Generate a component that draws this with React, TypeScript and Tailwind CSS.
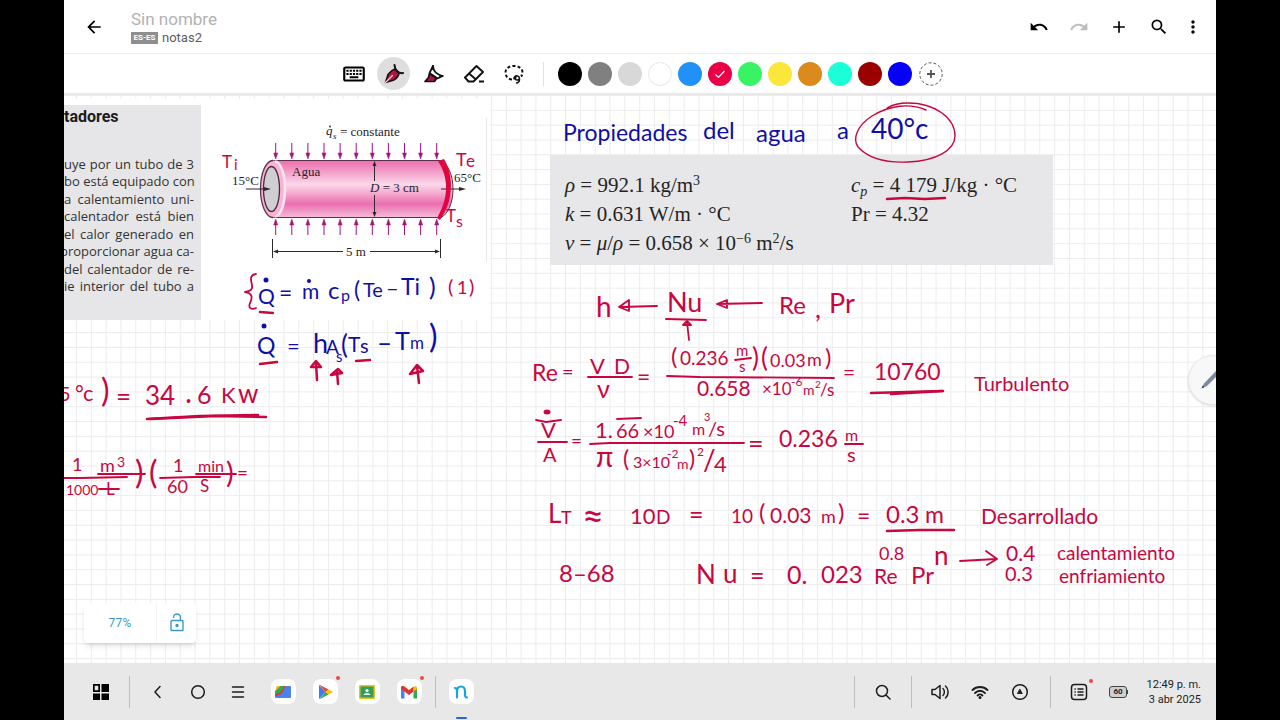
import type { ReactNode } from "react";
import {
  MdAdd,
  MdArrowBack,
  MdMoreVert,
  MdOutlineKeyboard,
  MdRedo,
  MdSearch,
  MdUndo,
} from "react-icons/md";

const RED = "#c9063f";
const BLUE = "#100ea6";

const swatches = [
  { name: "Negro", className: "bg-black" },
  { name: "Gris", className: "bg-[#808080]" },
  { name: "Gris claro", className: "bg-[#d8d8d8]" },
  { name: "Blanco", className: "bg-white border border-gray-200" },
  { name: "Azul", className: "bg-[#2190f8]" },
  { name: "Rojo", className: "bg-[#ea0046]", selected: true },
  { name: "Verde", className: "bg-[#38f364]" },
  { name: "Amarillo", className: "bg-[#fbe63c]" },
  { name: "Naranja", className: "bg-[#dc8a1c]" },
  { name: "Turquesa", className: "bg-[#1affd8]" },
  { name: "Vino", className: "bg-[#9b0000]" },
  { name: "Azul oscuro", className: "bg-[#0600f6]" },
];

// [text, x, baseline, size]
type Word = [string, number, number, number];

const blueWords: Word[] = [
  ["Propiedades", 563, 141, 23],
  ["del", 703, 139, 24],
  ["agua", 756, 142, 24],
  ["a", 837, 139, 24],
  ["40°c", 871, 139, 28],
  ["Q", 258, 304, 21],
  ["=", 279, 301, 23],
  ["m", 302, 299, 21],
  ["c", 328, 299, 24],
  ["p", 341, 301, 16],
  ["(", 354, 298, 23],
  ["Te", 363, 297, 20],
  ["–", 386, 296, 22],
  ["Ti", 401, 295, 23],
  [")", 429, 296, 25],
  ["Q", 257, 354, 23],
  ["=", 287, 354, 22],
  ["h", 313, 353, 27],
  ["A", 326, 354, 19],
  ["s", 336, 362, 15],
  ["(", 341, 354, 26],
  ["T", 348, 352, 21],
  ["s", 360, 353, 20],
  ["–", 377, 352, 26],
  ["T", 395, 350, 25],
  ["m", 410, 349, 17],
  [")", 429, 348, 32],
];

const redWords: Word[] = [
  ["(", 448, 294, 20],
  ["1", 457, 294, 18],
  [")", 469, 294, 20],
  ["T", 222, 168, 17],
  ["i", 234, 170, 15],
  ["T", 456, 166, 18],
  ["e", 466, 167, 17],
  ["T", 446, 222, 17],
  ["s", 456, 227, 16],
  // left column
  ["5", 59, 401, 20],
  ["°", 75, 401, 21],
  ["c", 83, 401, 22],
  [")", 101, 402, 32],
  ["=", 116, 406, 26],
  ["34", 145, 405, 26],
  [".", 185, 403, 30],
  ["6", 197, 404, 25],
  ["K", 221, 403, 22],
  ["w", 238, 403, 26],
  ["1", 72, 471, 18],
  ["m", 100, 472, 18],
  ["3", 117, 467, 14],
  ["1000", 66, 495, 14],
  ["L", 106, 495, 17],
  [")", 135, 484, 32],
  ["(", 149, 484, 32],
  ["1", 173, 472, 18],
  ["min", 198, 472, 16],
  ["60", 167, 493, 18],
  ["S", 200, 492, 17],
  [")", 226, 483, 29],
  ["=", 237, 480, 19],
  // h <- Nu <- Re, Pr
  ["h", 596, 317, 28],
  ["Nu", 667, 312, 27],
  ["Re", 779, 314, 24],
  [",", 815, 318, 26],
  ["Pr", 829, 313, 27],
  // Reynolds
  ["Re", 532, 381, 23],
  ["=", 562, 379, 20],
  ["V", 590, 374, 22],
  ["D", 614, 374, 21],
  ["ν", 597, 398, 25],
  ["=", 637, 385, 23],
  ["(", 671, 365, 24],
  ["0.236", 680, 365, 19],
  ["m", 736, 356, 15],
  ["s", 739, 372, 15],
  [")", 752, 367, 26],
  ["(", 761, 367, 26],
  ["0.03", 770, 367, 18],
  ["m", 807, 366, 18],
  [")", 825, 366, 24],
  ["0.658", 697, 396, 21],
  ["×10", 762, 395, 17],
  ["-6", 791, 386, 12],
  ["m", 803, 395, 14],
  ["2", 815, 388, 10],
  ["/s", 820, 396, 17],
  ["=", 843, 380, 21],
  ["10760", 874, 380, 23],
  ["Turbulento", 974, 391, 20],
  // Velocity
  ["V", 541, 438, 22],
  ["A", 543, 462, 20],
  ["=", 571, 448, 19],
  ["1.", 595, 438, 22],
  ["66", 616, 438, 20],
  ["×10", 643, 438, 18],
  ["-4", 673, 426, 15],
  ["m", 692, 435, 16],
  ["3", 704, 421, 11],
  ["/s", 708, 436, 20],
  ["π", 596, 467, 28],
  ["(", 623, 467, 23],
  ["3×10", 633, 468, 16],
  ["-2", 667, 458, 12],
  ["m", 677, 469, 14],
  [")", 689, 467, 23],
  ["2", 697, 456, 12],
  ["/", 703, 470, 28],
  ["4", 714, 472, 22],
  ["=", 748, 453, 27],
  ["0.236", 779, 447, 23],
  ["m", 845, 441, 16],
  ["s", 847, 462, 20],
  // Entry length
  ["L", 548, 523, 26],
  ["T", 561, 524, 18],
  ["≈", 582, 529, 38],
  ["10", 630, 524, 22],
  ["D", 656, 524, 19],
  ["=", 689, 524, 25],
  ["10", 731, 523, 19],
  ["(", 759, 521, 24],
  ["0.03", 770, 523, 21],
  ["m", 821, 523, 18],
  [")", 838, 521, 24],
  ["=", 857, 524, 23],
  ["0.3", 886, 523, 24],
  ["m", 925, 523, 23],
  ["Desarrollado", 981, 524, 21],
  // Dittus-Boelter
  ["8–68", 559, 582, 24],
  ["N", 696, 584, 26],
  ["u", 723, 583, 26],
  ["=", 750, 585, 25],
  ["0.", 787, 584, 25],
  ["023", 821, 583, 24],
  ["Re", 874, 584, 21],
  ["0.8", 879, 560, 18],
  ["Pr", 911, 584, 24],
  ["n", 934, 565, 26],
  ["0.4", 1006, 561, 21],
  ["calentamiento", 1057, 560, 19],
  ["0.3", 1005, 581, 20],
  ["enfriamiento", 1059, 583, 19],
];

const inkLines = [
  // fraction bars, underlines
  "M64 478H80L127 477", "M98 474H145", "M160 478L195 477L220 477", "M196 474H236",
  "M99 489H119", "M666 319L706 320", "M588 377H632", "M667 376L700 377L834 378",
  "M735 360L751 358", "M538 442H567", "M590 444L610 443L744 443", "M617 419L641 418",
  "M845 444H863", "M536 420L546 422L561 420",
  // arrows
  "M657 306L620 307M629 300L619 307L629 311Z", "M762 303L717 304M727 300L717 304L727 308Z",
  "M689 340L687 322M683 325L687 321L691 325Z",
  "M960 561L996 559M986 551L997 559L987 565",
  // brace
  "M256 274C249 275 251 281 252 285C253 290 250 291 245 292C252 293 253 297 250 303C248 308 251 310 256 308",
];

const thickLines = [
  "M260 312L273 313", "M260 364L277 362", "M356 361L370 360",
  "M147 419L200 416L258 415", "M150 419L215 416L266 417",
  "M871 393L943 391", "M891 394L942 391", "M887 531L920 530L954 530",
  "M887 199L905 198L925 199L945 198",
  "M317 380L316 363M311 367L316 361L321 367Z", "M338 384L337 371M331 375L338 369L342 373Z",
  "M419 383L417 366M410 374L417 365L423 371Z",
];

const heatArrows = Array.from({ length: 11 }, (_, i) => 275.7 + i * 16.1);

function Ink({ words, color }: { words: Word[]; color: string }) {
  return (
    <g fill={color} className="font-['Lato','DejaVu_Sans',sans-serif]">
      {words.map(([text, x, y, size]) => (
        <text key={`${text}-${x}-${y}`} x={x} y={y} fontSize={size}>
          {text}
        </text>
      ))}
    </g>
  );
}

function PipeDiagram() {
  return (
    <g>
      <defs>
        <linearGradient id="pipe" x1="0" y1="0" x2="0" y2="1">
          <stop offset="0" stopColor="#ee6fb0" />
          <stop offset="0.14" stopColor="#f08fc0" />
          <stop offset="0.42" stopColor="#fbd8ea" />
          <stop offset="0.6" stopColor="#f4a2cb" />
          <stop offset="0.76" stopColor="#ea6fb0" />
          <stop offset="1" stopColor="#f7bbd9" />
        </linearGradient>
      </defs>
      <path d="M486.500 118V262" stroke="#e6e6e6" />
      <path
        d="M273 160.500H441C448 164 453 175 453 189S448 214 441 217.500H273Z"
        fill="url(#pipe)"
        stroke="#5c3048"
      />
      <ellipse cx="273" cy="189" rx="12" ry="28.500" fill="#f7b4d5" />
      <path d="M273 160.500A12.500 28.500 0 0 0 273 217.500" fill="none" stroke="#5c3048" strokeWidth="1.300" />
      <path d="M275 161.500A10 27.500 0 0 1 275 216.500" fill="none" stroke="#fde3ef" strokeWidth="2.500" />
      <ellipse cx="271.500" cy="189" rx="8" ry="22.500" fill="#cfcfd3" stroke="#4a2a3c" strokeWidth="1.300" />

      {heatArrows.map((x) => (
        <g key={x} stroke="#a8107c" fill="#a8107c">
          <path d={`M${x} 143V155`} />
          <path d={`M${x} 159l-2-6h4z`} strokeWidth="0.500" />
          <path d={`M${x} 235V224`} />
          <path d={`M${x} 219l-2 6h4z`} strokeWidth="0.500" />
        </g>
      ))}

      <g stroke="#2a2a2a" fill="none">
        <path d="M246 189H265M441 189H461M374.500 164V181M374.500 195V214" />
        <path d="M272.500 239V258M440.500 239V258M276 251.500H343M370 251.500H437" />
      </g>
      <g fill="#2a2a2a">
        <path d="M271 189l-7-2v4zM466 189l-7-2v4zM374.500 161l-2 5h4zM374.500 217l-2-5h4z" />
        <path d="M273 251.500l5-2v4zM440 251.500l-5-2v4z" />
      </g>

      <g fill="#26222a" fontSize="13" className="font-['Liberation_Serif',serif]">
        <text x="326" y="135" fontStyle="italic">q</text>
        <circle cx="330" cy="126.500" r="0.900" />
        <text x="333" y="139" fontSize="9" fontStyle="italic">s</text>
        <text x="340" y="136">= constante</text>
        <text x="292" y="176">Agua</text>
        <text x="232" y="185">15°C</text>
        <text x="454" y="182">65°C</text>
        <text x="370" y="192"><tspan fontStyle="italic">D</tspan> = 3 cm</text>
        <text x="346" y="256">5 m</text>
      </g>
    </g>
  );
}

function Property({ children }: { children: ReactNode }) {
  return <p className="h-[29px] leading-[29px] whitespace-nowrap">{children}</p>;
}

function Sup({ children }: { children: ReactNode }) {
  return <sup className="text-sm leading-none">{children}</sup>;
}

function Page() {
  return (
    <main className="relative min-h-0 flex-1 overflow-hidden bg-white">
      <svg aria-hidden="true" className="absolute inset-0 h-full w-full">
        <defs>
          <pattern id="grid" x="12" y="0" width="14.820" height="14.820" patternUnits="userSpaceOnUse">
            <path d="M0.500 0V14.820M0 0.500H14.820" stroke="#ececec" fill="none" />
          </pattern>
        </defs>
        <rect width="100%" height="100%" fill="url(#grid)" />
      </svg>

      {/* pasted textbook clippings */}
      <div className="absolute top-1 left-0 h-[221px] w-[426px] bg-white" />
      <section className="absolute top-[10px] left-0 h-[215px] w-[137px] overflow-hidden bg-[#e6e6e8] font-['Open_Sans',sans-serif] text-[#333]">
        <h2 className="flex h-6 items-center font-['Roboto',sans-serif] text-base font-bold text-[#1c1c1c]">
          tadores
        </h2>
        <div className="mt-[27px] mr-[7px] text-[13px] leading-[17px] whitespace-nowrap [text-align-last:justify]">
          <p>uye por un tubo de 3</p>
          <p className="pb-px">bo está equipado con</p>
          <p>a calentamiento uni-</p>
          <p className="pb-px">calentador está bien</p>
          <p>el calor generado en</p>
          <p className="-ml-1 pb-px">proporcionar agua ca-</p>
          <p>del calentador de re-</p>
          <p>ie interior del tubo a</p>
        </div>
      </section>
      <section className="absolute top-[60px] left-[486px] flex h-[110px] w-[503px] bg-[#e7e7e9] px-[15px] pt-4 font-['Liberation_Serif',serif] text-[21px] text-[#242424]">
        <div className="w-[286px]">
          <Property><i>ρ</i> = 992.1 kg/m<Sup>3</Sup></Property>
          <Property><i>k</i> = 0.631 W/m · °C</Property>
          <Property>
            <i>ν</i> = <i>μ</i>/<i>ρ</i> = 0.658 × 10<Sup>−6</Sup> m<Sup>2</Sup>/s
          </Property>
        </div>
        <div>
          <Property><i>c</i><sub className="text-sm leading-none italic">p</sub> = 4 179 J/kg · °C</Property>
          <Property>Pr = 4.32</Property>
        </div>
      </section>

      {/* drawing layer */}
      <svg
        viewBox="64 95 1152 568"
        className="pointer-events-none absolute top-0 left-0 h-[568px] w-[1152px]"
      >
        <PipeDiagram />
        <Ink words={blueWords} color={BLUE} />
        <Ink words={redWords} color={RED} />
        <g fill={BLUE}>
          <circle cx="266" cy="280" r="2.500" />
          <circle cx="309" cy="281" r="2" />
          <circle cx="264" cy="326" r="2.500" />
        </g>
        <ellipse cx="547" cy="412" rx="3.500" ry="2.500" fill={RED} />
        <g fill="none" stroke={RED} strokeLinecap="round" strokeLinejoin="round">
          <g strokeWidth="1.800">
            {inkLines.map((d) => <path key={d} d={d} />)}
          </g>
          <g strokeWidth="2.500">
            {thickLines.map((d) => <path key={d} d={d} />)}
          </g>
          <path
            d="M926 110C910 103 890 105 872 116C858 125 852 138 858 147C868 158 885 163 908 162C936 161 955 150 955 136C955 118 935 103 908 103C898 103 892 105 887 108"
            strokeWidth="1.400"
          />
        </g>
        <path d="M438 161L444 159C453 174 455 199 440 220L437 218C449 198 449 178 438 161Z" fill="#e0053f" />
      </svg>

      <div className="absolute bottom-5 left-5 flex h-10 items-center rounded-sm bg-white shadow-md">
        <button className="h-10 w-[73px] border-r border-gray-100 font-['Roboto',sans-serif] text-xs tracking-wide text-[#3b9acb]">
          77%
        </button>
        <button aria-label="Bloquear zoom" className="flex h-10 w-[39px] items-center justify-center">
          <svg viewBox="0 0 16 20" className="h-5 w-4" fill="none" stroke="#3b9acb" strokeWidth="1.400">
            <rect x="2" y="7.500" width="12" height="10" rx="0.800" />
            <path d="M4.500 5V4.500A3.500 3.500 0 0 1 11.500 4.500V7.500" />
            <circle cx="8" cy="12.500" r="1" fill="#3b9acb" />
          </svg>
        </button>
      </div>

      <button
        aria-label="Lápiz"
        className="absolute top-[260px] -right-[22px] flex h-[50px] w-[50px] items-center rounded-full border border-gray-200 bg-[#f8f8f8] pl-3 shadow-sm"
      >
        <svg viewBox="0 0 24 24" className="h-6 w-6" fill="#7e89a3">
          <path d="M0.500 20.500L3 15.500L17 1L20 4L6 18Z" />
          <path d="M0.500 20.500L1.700 17.500L3.500 19Z" fill="#3c4662" />
        </svg>
      </button>
    </main>
  );
}

function Tool({ label, active, children }: { label: string; active?: boolean; children: ReactNode }) {
  return (
    <button aria-label={label} className="flex w-10 items-center justify-center">
      <span
        className={
          active
            ? "flex h-[33px] w-[33px] items-center justify-center rounded-full bg-[#dedede]"
            : "flex items-center justify-center"
        }
      >
        {children}
      </span>
    </button>
  );
}

function Header() {
  return (
    <header className="flex h-[54px] shrink-0 items-center border-b border-[#ededed] pr-[10px] pl-5 font-['Roboto',sans-serif] text-black">
      <button aria-label="Atrás" className="flex w-5 justify-center">
        <MdArrowBack className="h-5 w-5" />
      </button>
      <div className="mt-[3px] ml-[27px] flex flex-col">
        <h1 className="text-[17px] leading-5 text-[#b2b2b2]">Sin nombre</h1>
        <div className="flex items-center gap-1 text-[13px] leading-[18px] text-[#5c5c5c]">
          <span className="flex h-3 w-[27px] items-center justify-center bg-[#8e8e8e] text-[8px] font-bold text-white">
            ES-ES
          </span>
          <span>notas2</span>
        </div>
      </div>
      <div className="ml-auto flex items-center">
        <button aria-label="Deshacer" className="flex w-10 justify-center"><MdUndo className="h-5 w-5" /></button>
        <button aria-label="Rehacer" className="flex w-10 justify-center text-[#bdbdbd]"><MdRedo className="h-5 w-5" /></button>
        <button aria-label="Añadir" className="flex w-10 justify-center"><MdAdd className="h-5 w-5" /></button>
        <button aria-label="Buscar" className="flex w-10 justify-center"><MdSearch className="h-5 w-5" /></button>
        <button aria-label="Más opciones" className="flex w-[27px] justify-center"><MdMoreVert className="h-5 w-5" /></button>
      </div>
    </header>
  );
}

function Toolbar() {
  return (
    <nav className="flex h-[41px] shrink-0 items-center justify-center border-b-2 border-[#e8e8e8]">
      <Tool label="Teclado"><MdOutlineKeyboard className="h-[26px] w-[26px] text-black" /></Tool>
      <Tool label="Pluma" active>
        <svg viewBox="0 0 20 20" className="h-5 w-5" stroke="#111" strokeWidth="1.500" strokeLinejoin="round" strokeLinecap="round">
          <path d="M1.500 18.500L4 10.500C6 7.500 8 6 11 5L15 9.500C14.500 12 13 14 10 16Z" fill="#b3123f" />
          <path d="M10.500 1C10.500 3.500 11 5 13 7C15 9 16.500 9.500 19 9" fill="none" strokeWidth="2" />
          <path d="M1.500 18.500L8.500 11.500" fill="none" stroke="#f4d3dc" strokeWidth="1.200" />
        </svg>
      </Tool>
      <Tool label="Rotulador">
        <svg viewBox="0 0 20 20" className="h-5 w-5" stroke="#111" strokeWidth="1.700" strokeLinejoin="round" strokeLinecap="round">
          <path d="M9 2C9 6 12 10 18.500 12L13.500 14.500L5.500 9Z" fill="#fff" />
          <path d="M5.500 9.500L12.500 14.500L10.500 17.500H1L4.500 13.500Z" fill="#b3123f" />
          <path d="M9 2V5M18.500 12H16" fill="none" strokeWidth="2.200" />
        </svg>
      </Tool>
      <Tool label="Borrador">
        <svg viewBox="0 0 20 20" className="h-5 w-5" fill="none" stroke="#111" strokeWidth="1.900" strokeLinejoin="round">
          <path d="M1 13.500L12.500 2L19 8L9.500 17.500H4.500Z" />
          <path d="M5 9.500L12 15.500M15 17.500H20" />
        </svg>
      </Tool>
      <Tool label="Lazo">
        <svg viewBox="0 0 20 20" className="h-5 w-5" fill="none" stroke="#111" strokeWidth="2">
          <path d="M8 15.500C4 15 1.500 12.500 1.500 8.500C1.500 4.500 5 2 10 2S18.500 4.500 18.500 8.500C18.500 10 18 11.500 17 12.500" strokeDasharray="3 2.200" />
          <path d="M10.500 15.500C9 14 11 11.500 13.500 12S16 16 13.500 16S10.500 14 12.500 13.500M15.500 15C15.500 17.500 14.500 19 12 19" strokeWidth="1.600" />
        </svg>
      </Tool>
      <span className="mr-[11px] ml-[9px] h-6 w-px bg-[#e0e0e0]" />
      {swatches.map((swatch) => (
        <button key={swatch.name} aria-label={swatch.name} className="flex w-[30px] justify-center">
          <span className={`flex h-6 w-6 items-center justify-center rounded-full ${swatch.className}`}>
            {swatch.selected && (
              <svg viewBox="0 0 12 12" className="h-3 w-3" fill="none" stroke="#fff" strokeWidth="1.200">
                <path d="M1.500 6.500L4.500 9.500L10.500 3" />
              </svg>
            )}
          </span>
        </button>
      ))}
      <button aria-label="Añadir color" className="flex w-8 justify-center">
        <svg viewBox="0 0 24 24" className="h-6 w-6" fill="none" stroke="#555">
          <circle cx="12" cy="12" r="11.200" strokeDasharray="3 2" />
          <path d="M12 8V16M8 12H16" strokeWidth="1.800" />
        </svg>
      </button>
    </nav>
  );
}

function AppIcon({ label, dot, children }: { label: string; dot?: boolean; children: ReactNode }) {
  return (
    <button aria-label={label} className="relative flex w-[42px] justify-center">
      <span className="flex h-[25px] w-[25px] items-center justify-center rounded-lg bg-white">
        <svg viewBox="0 0 18 18" className="h-[18px] w-[18px]">{children}</svg>
      </span>
      {dot && <span className="absolute -top-[3px] right-[6px] h-1 w-1 rounded-full bg-[#f04848]" />}
    </button>
  );
}

function SystemIcon({ label, children }: { label: string; children: ReactNode }) {
  return (
    <button aria-label={label} className="flex w-10 justify-center">
      <svg viewBox="0 0 20 20" className="h-5 w-5" fill="none" stroke="#1d1d1d" strokeWidth="1.500" strokeLinecap="round" strokeLinejoin="round">
        {children}
      </svg>
    </button>
  );
}

function Taskbar() {
  return (
    <footer className="flex h-[57px] shrink-0 items-center bg-[#e8e8e8] pr-[15px] pl-[17px] font-['Roboto',sans-serif] text-[#1d1d1d]">
      <SystemIcon label="Aplicaciones">
        <g fill="#000" stroke="none">
          <path d="M2 2H9V10H2ZM3.700 3.700V8.300H7.300V3.700Z" fillRule="evenodd" />
          <path d="M10.500 2H18V10H10.500ZM2 11.500H9V18H2ZM10.500 11.500H18V18H10.500Z" />
        </g>
      </SystemIcon>
      <span className="mr-2 ml-2 h-8 w-px bg-[#bdbdbd]" />
      <SystemIcon label="Volver"><path d="M12 4.500L7 10L12 15.500" /></SystemIcon>
      <SystemIcon label="Inicio"><circle cx="10" cy="10" r="6.300" /></SystemIcon>
      <SystemIcon label="Recientes"><path d="M4.500 5H15.500M4.500 10H15.500M4.500 15H15.500" /></SystemIcon>
      <span className="w-1" />
      <AppIcon label="Archivos">
        <path d="M4 3H16Q17 3 17 4V14Q17 15 16 15H2Q1 15 1 14V9Z" fill="#4a84e8" />
        <path d="M1 13V9L7 3H11C10.500 8 7 12.500 1 13Z" fill="#d93b30" />
        <path d="M1 11V8L6 3H9.500C9 7.500 6 10.500 1 11Z" fill="#36a852" />
        <path d="M2 7.500L6.500 3H4Q2 3 2 5Z" fill="#f6b91c" />
      </AppIcon>
      <AppIcon label="Play Store" dot>
        <path d="M3 2V16L9.500 9Z" fill="#3b7ded" />
        <path d="M3 1.500L12.500 6.500L9.500 9Z" fill="#ea4335" />
        <path d="M3 16.500L12.500 11.500L9.500 9Z" fill="#34a853" />
        <path d="M12.500 6.500L17 9L12.500 11.500L9.500 9Z" fill="#fbbc04" />
      </AppIcon>
      <AppIcon label="Classroom">
        <rect x="1" y="2" width="16" height="14" rx="1" fill="#f2bc1f" />
        <rect x="2.500" y="3.500" width="13" height="11" fill="#2da05a" />
        <circle cx="9" cy="7.500" r="1.600" fill="#fff" />
        <path d="M5.500 12C5.500 9.500 12.500 9.500 12.500 12Z" fill="#fff" />
      </AppIcon>
      <AppIcon label="Gmail" dot>
        <path d="M1 4V15.500H4.500V7Z" fill="#4285f4" />
        <path d="M17 4V15.500H13.500V7Z" fill="#34a853" />
        <path d="M13.500 8.500V4.500L15 3L17 4V6Z" fill="#fbbc04" />
        <path d="M1 4.500C1 3 3 2 4.500 3.500L9 7L13.500 3.500V8.500L9 12L1 6Z" fill="#e2382c" />
      </AppIcon>
      <span className="ml-[5px] h-8 w-px bg-[#bdbdbd]" />
      <button aria-label="Nebo" className="relative ml-1 flex h-[57px] w-[42px] items-center justify-center">
        <span className="flex h-[25px] w-[25px] items-center justify-center rounded-lg bg-white">
          <svg viewBox="0 0 18 18" className="h-[18px] w-[18px]" fill="none" stroke="#18a5dc" strokeWidth="2.200" strokeLinecap="round">
            <path d="M3 5C4.500 5 5 6 5 8V14.500M5 8.500C5 5 6.500 3.500 9 3.500S13 5 13 8.500V11.500C13 13.500 13.500 14.500 15 14.500" />
          </svg>
        </span>
        <span className="absolute bottom-px h-[2px] w-[11px] rounded-full bg-[#2f62d9]" />
      </button>

      <span className="mr-2 ml-auto h-8 w-px bg-[#bdbdbd]" />
      <SystemIcon label="Buscar"><circle cx="9" cy="9" r="5.500" /><path d="M13.200 13.200L17 17" /></SystemIcon>
      <span className="mr-2 ml-2 h-8 w-px bg-[#bdbdbd]" />
      <SystemIcon label="Volumen">
        <path d="M2 7.500V12.500H5L10 16.500V3.500L5 7.500ZM13 6.500C14.800 8 14.800 12 13 13.500M15.500 4C19 7 19 13 15.500 16" />
      </SystemIcon>
      <SystemIcon label="Wi-Fi">
        <path d="M2.500 8C6.500 4 13.500 4 17.500 8M5 11C8 8 12 8 15 11M7.500 13.500C9 12.200 11 12.200 12.500 13.500" strokeWidth="1.800" />
        <circle cx="10" cy="15.500" r="0.800" fill="#1d1d1d" />
      </SystemIcon>
      <SystemIcon label="Navegación">
        <circle cx="10" cy="10" r="7.300" />
        <path d="M10 7.500L12.200 11.500H7.800Z" fill="#1d1d1d" strokeWidth="1" />
      </SystemIcon>
      <span className="mr-2 ml-[10px] h-8 w-px bg-[#bdbdbd]" />
      <div className="relative">
        <SystemIcon label="Notificaciones">
          <rect x="2.500" y="2.500" width="15" height="15" rx="3" />
          <path d="M6 7H6.200M6 10H6.200M6 13H6.200M9 7H14M9 10H14M9 13H14" />
        </SystemIcon>
        <span className="absolute -top-[3px] right-[6px] h-1 w-1 rounded-full bg-[#f04848]" />
      </div>
      <div className="flex w-10 items-center justify-center">
        <span className="flex h-3 w-[18px] items-center justify-center rounded-[3px] border border-[#444] bg-[#cfcfcf] text-[8px] font-bold">
          60
        </span>
        <span className="h-1 w-px bg-[#444]" />
      </div>
      <div className="ml-2 text-right text-[11px] leading-[15px] whitespace-nowrap">
        <p>12:49 p. m.</p>
        <p>3 abr 2025</p>
      </div>
    </footer>
  );
}

export default function App() {
  return (
    <div className="h-screen bg-black px-16">
      <div className="flex h-full flex-col bg-white">
        <Header />
        <Toolbar />
        <Page />
        <Taskbar />
      </div>
    </div>
  );
}
